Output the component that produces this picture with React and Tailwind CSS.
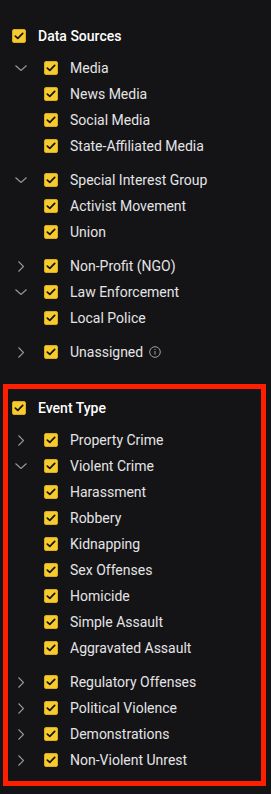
import { Fragment } from 'react';

const dataSources = [
  { label: 'Media', open: true, children: ['News Media', 'Social Media', 'State-Affiliated Media'] },
  { label: 'Special Interest Group', open: true, children: ['Activist Movement', 'Union'] },
  { label: 'Non-Profit (NGO)', open: false },
  { label: 'Law Enforcement', open: true, children: ['Local Police'] },
  { label: 'Unassigned', open: false, info: true },
];

const eventTypes = [
  { label: 'Property Crime', open: false },
  {
    label: 'Violent Crime',
    open: true,
    children: ['Harassment', 'Robbery', 'Kidnapping', 'Sex Offenses', 'Homicide', 'Simple Assault', 'Aggravated Assault'],
  },
  { label: 'Regulatory Offenses', open: false },
  { label: 'Political Violence', open: false },
  { label: 'Demonstrations', open: false },
  { label: 'Non-Violent Unrest', open: false },
];

function Check() {
  return (
    <span className="flex h-[14px] w-[14px] shrink-0 items-center justify-center rounded-[2px] border border-[#d9ac1c] bg-[#f7cb2e]">
      <svg width="10" height="8" viewBox="0 0 10 8" fill="none">
        <path d="M1.3 4.1 L3.8 6.4 L8.7 1.4" stroke="#141414" strokeWidth="1.7" strokeLinecap="round" strokeLinejoin="round" />
      </svg>
    </span>
  );
}

function Chevron({ open }) {
  if (open) {
    return (
      <svg width="12" height="6" viewBox="0 0 12 6" fill="none" className="ml-[3px]">
        <path d="M0.5 0.5 L6 5.5 L11.5 0.5" stroke="#9b9ba0" strokeWidth="1.1" />
      </svg>
    );
  }
  return (
    <svg width="6" height="11" viewBox="0 0 6 11" fill="none" className="ml-[6px]">
      <path d="M0.5 0.5 L5.5 5.5 L0.5 10.5" stroke="#9b9ba0" strokeWidth="1.1" />
    </svg>
  );
}

function Info() {
  return (
    <svg width="12" height="12" viewBox="0 0 12 12" fill="none" className="ml-[6px]">
      <circle cx="6" cy="6" r="5.3" stroke="#a0a0a4" strokeWidth="1" />
      <rect x="5.5" y="5" width="1" height="3.6" fill="#a0a0a4" />
      <rect x="5.5" y="3" width="1" height="1" fill="#a0a0a4" />
    </svg>
  );
}

function Row({ label, chevron, open, info }) {
  return (
    <div className="flex h-[26px] items-center">
      <div className="flex w-[32px] shrink-0 items-center">{chevron && <Chevron open={open} />}</div>
      <Check />
      <span className="ml-[12px] text-[14px] text-[#e4e4e6]">{label}</span>
      {info && <Info />}
    </div>
  );
}

function Section({ title, groups }) {
  return (
    <div>
      <div className="flex h-[26px] items-center">
        <Check />
        <span className="ml-[12px] text-[14px] font-medium text-white">{title}</span>
      </div>
      <div className="mt-[6px]">
        {groups.map((g) => (
          <Fragment key={g.label}>
            <Row label={g.label} chevron open={g.open} info={g.info} />
            {g.open && g.children && (
              <div className="mb-[8px]">
                {g.children.map((c) => (
                  <Row key={c} label={c} />
                ))}
              </div>
            )}
          </Fragment>
        ))}
      </div>
    </div>
  );
}

export default function App() {
  return (
    <div className="min-h-[794px] w-[271px] bg-[#141416] pt-[23px] pb-[8px]" style={{ fontFamily: 'Roboto, "Noto Sans", sans-serif' }}>
      <div className="pl-[12px]">
        <Section title="Data Sources" groups={dataSources} />
      </div>
      <div className="mt-[19px] ml-[3px] mr-[5px] border-[5px] border-[#ff1f00] pt-[6px] pb-[8px] pl-[4px]">
        <Section title="Event Type" groups={eventTypes} />
      </div>
    </div>
  );
}
